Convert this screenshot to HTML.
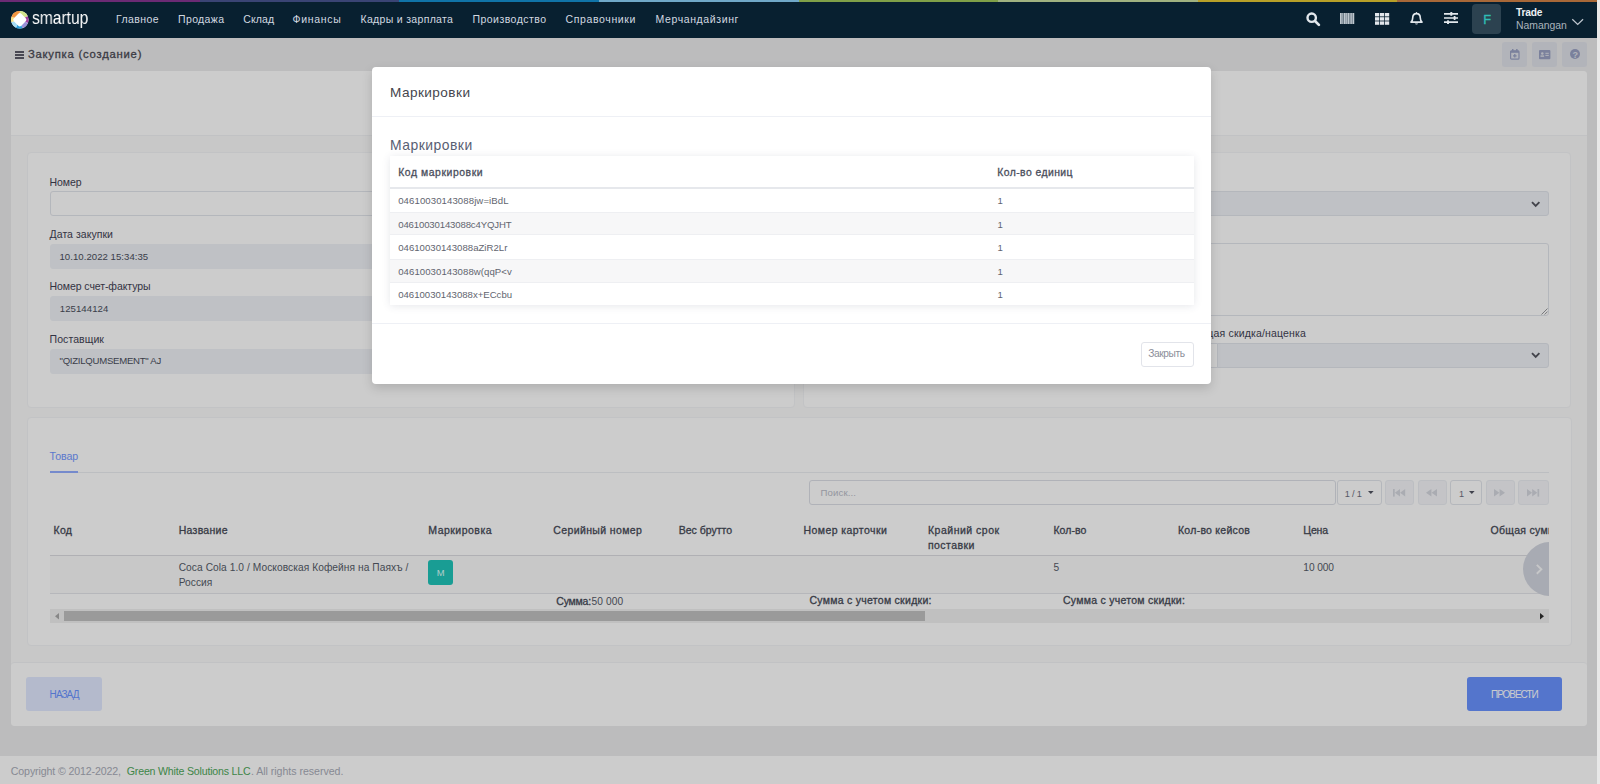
<!DOCTYPE html>
<html lang="ru">
<head>
<meta charset="utf-8">
<title>Закупка (создание)</title>
<style>
*{box-sizing:border-box;margin:0;padding:0}
html,body{width:1600px;height:784px;overflow:hidden}
body{position:relative;background:#ebebed;font-family:"Liberation Sans",sans-serif;font-size:11px;color:#3f4254}
#page{position:absolute;left:0;top:0;width:1597px;height:784px;overflow:hidden;background:#ebebed}
#vscroll{position:absolute;left:1597px;top:0;width:3px;height:784px;background:#e8e8e8}
#backdrop{position:absolute;left:0;top:0;width:1597px;height:784px;background:rgba(0,0,0,.2)}
#nav{position:absolute;left:0;top:0;width:1597.2px;height:37.7px;background:#082030}
#stripe{position:absolute;left:0;top:0;width:1597px;height:2px;display:flex}
#stripe i{flex:1;height:2px;display:block}
.t{position:absolute;white-space:nowrap;line-height:1}
.b{position:absolute}
.card{position:absolute;background:#fff;border:1px solid #f3f4f7;border-radius:4px}
.inp{position:absolute;height:25px;border-radius:3px;background:#eff2f7;border:1px solid #eff2f7}
.inp.o{background:#fff;border:1px solid #e2e5ec}
.inp.s{border:1px solid #e2e5ec}
.pg{position:absolute;top:480px;height:25px;border:1px solid #e2e5ec;border-radius:3px;background:#fff}
.pg.d{background:#f5f6f9;border-color:#eceef3}
svg{position:absolute;overflow:visible}
#modal{position:absolute;left:372px;top:67px;width:839px;height:317px;background:#fff;border-radius:4px;box-shadow:0 4px 11px rgba(0,0,0,.15)}
.row{position:absolute;left:0;width:804px}
</style>
</head>
<body>
<div id="page">
<div class="b" style="left:15px;top:51.2px;width:8.6px;height:1.5px;background:#5c5a68"></div>
<div class="b" style="left:15px;top:54.1px;width:8.6px;height:1.5px;background:#5c5a68"></div>
<div class="b" style="left:15px;top:57px;width:8.6px;height:1.5px;background:#5c5a68"></div>
<span class="t" style="left:27.90px;top:49.00px;font-size:11.3px;color:#4a4a54;-webkit-text-stroke:.3px #4a4a54;letter-spacing:0.757px;">Закупка (создание)</span>
<div class="b" style="left:1502px;top:42.2px;width:24.6px;height:24.6px;border-radius:3px;background:#dfe1e9"></div>
<div class="b" style="left:1532.3px;top:42.2px;width:24.6px;height:24.6px;border-radius:3px;background:#dfe1e9"></div>
<div class="b" style="left:1562.3px;top:42.2px;width:24.6px;height:24.6px;border-radius:3px;background:#dfe1e9"></div>
<svg style="left:1509.5px;top:48.8px" width="9.6" height="10.8" viewBox="0 0 9.6 10.8"><rect x="0.6" y="1.8" width="8.4" height="8.4" rx="1" fill="none" stroke="#9aa2c4" stroke-width="1.2"/><rect x="0.6" y="1.8" width="8.4" height="2" fill="#9aa2c4"/><rect x="2" y="0" width="1.5" height="2.4" fill="#9aa2c4"/><rect x="6.1" y="0" width="1.5" height="2.4" fill="#9aa2c4"/><path d="M4.8 5 V8.6 M3 6.8 H6.6" stroke="#9aa2c4" stroke-width="1.3"/></svg>
<svg style="left:1538.8px;top:49.7px" width="11.4" height="9.2" viewBox="0 0 11.4 9.2"><rect x="0" y="0" width="11.4" height="9.2" rx="1" fill="#9aa2c4"/><circle cx="3.3" cy="3.5" r="1.25" fill="#dfe1e9"/><rect x="1.5" y="5.4" width="3.6" height="1.4" fill="#dfe1e9"/><rect x="6.4" y="2.8" width="3.4" height="1" fill="#dfe1e9"/><rect x="6.4" y="4.9" width="3.4" height="1" fill="#dfe1e9"/></svg>
<svg style="left:1569.6px;top:49px" width="10" height="10" viewBox="0 0 10 10"><circle cx="5" cy="5" r="5" fill="#9aa2c4"/></svg>
<span class="t" style="left:1572.60px;top:51.00px;font-size:9px;color:#dfe1e9;font-weight:700;">?</span>
<div class="b" style="left:11px;top:71px;width:1576px;height:655px;background:#fafafa;border-radius:4px"></div>
<div class="b" style="left:11px;top:71px;width:1576px;height:64.5px;background:#fff;border-radius:4px 4px 0 0;border-bottom:1px solid #f2f3f6"></div>
<div class="b" style="left:11px;top:661.5px;width:1576px;height:64.5px;background:#fff;border-radius:4px;border-top:1px solid #f2f3f6"></div>
<div class="card" style="left:26.5px;top:151.5px;width:768px;height:256px"></div>
<div class="card" style="left:803.3px;top:151.5px;width:768px;height:256px"></div>
<div class="card" style="left:26.5px;top:416.5px;width:1545px;height:229px"></div>
<span class="t" style="left:49.60px;top:177.00px;font-size:10.5px;color:#3f4254;letter-spacing:-0.073px;">Номер</span>
<div class="inp o" style="left:49.5px;top:191.4px;width:721px"></div>
<span class="t" style="left:49.60px;top:229.00px;font-size:10.5px;color:#3f4254;letter-spacing:0.032px;">Дата закупки</span>
<div class="inp" style="left:49.5px;top:244.3px;width:721px"></div>
<span class="t" style="left:59.50px;top:252.00px;font-size:9.6px;color:#4a4e5c;letter-spacing:0.036px;">10.10.2022 15:34:35</span>
<span class="t" style="left:49.60px;top:281.00px;font-size:10.5px;color:#3f4254;letter-spacing:-0.079px;">Номер счет-фактуры</span>
<div class="inp" style="left:49.5px;top:296.4px;width:721px"></div>
<span class="t" style="left:59.80px;top:304.00px;font-size:9.6px;color:#4a4e5c;letter-spacing:0.055px;">125144124</span>
<span class="t" style="left:49.60px;top:334.00px;font-size:10.5px;color:#3f4254;letter-spacing:0.065px;">Поставщик</span>
<div class="inp" style="left:49.5px;top:349px;width:721px"></div>
<span class="t" style="left:59.50px;top:356.00px;font-size:9.6px;color:#4a4e5c;letter-spacing:-0.265px;">"QIZILQUMSEMENT" AJ</span>
<span class="t" style="left:826.40px;top:177.00px;font-size:10.5px;color:#3f4254;">Склад</span>
<div class="inp s" style="left:826.4px;top:191.3px;width:722.2px"></div>
<svg style="left:1531px;top:200.6px" width="9.4" height="6.4" viewBox="0 0 9.4 6.4"><path d="M1 1.2 L4.7 4.9 L8.4 1.2" fill="none" stroke="#54565f" stroke-width="1.9"/></svg>
<span class="t" style="left:826.40px;top:229.00px;font-size:10.5px;color:#3f4254;">Примечание</span>
<div class="inp o" style="left:826.4px;top:243.2px;width:722.2px;height:72.6px"></div>
<svg style="left:1540.5px;top:307.5px" width="7" height="7" viewBox="0 0 7 7"><path d="M0.5 6.5 L6.5 0.5 M3.6 6.5 L6.5 3.6" stroke="#8a8c92" stroke-width=".9"/></svg>
<span class="t" style="left:1190.30px;top:328.00px;font-size:10.5px;color:#3f4254;letter-spacing:0.163px;">Общая скидка/наценка</span>
<div class="inp o" style="left:1190.3px;top:342.8px;width:27.5px;border-radius:3px 0 0 3px"></div>
<div class="inp s" style="left:1216.6px;top:342.8px;width:332px;border-radius:0 3px 3px 0"></div>
<svg style="left:1531px;top:351.6px" width="9.4" height="6.4" viewBox="0 0 9.4 6.4"><path d="M1 1.2 L4.7 4.9 L8.4 1.2" fill="none" stroke="#54565f" stroke-width="1.9"/></svg>
<span class="t" style="left:49.60px;top:451.00px;font-size:10.6px;color:#7397ff;letter-spacing:-0.051px;">Товар</span>
<div class="b" style="left:49.5px;top:472px;width:1499px;height:1px;background:#eceef2"></div>
<div class="b" style="left:49.5px;top:471.4px;width:28.6px;height:1.7px;background:#93adff"></div>
<div class="pg" style="left:809.2px;width:526.8px;border-color:#dcdfe7"></div>
<span class="t" style="left:820.60px;top:488.00px;font-size:9.6px;color:#b9bcc8;letter-spacing:0.107px;">Поиск...</span>
<div class="pg" style="left:1336.5px;width:45px"></div>
<span class="t" style="left:1344.80px;top:490.00px;font-size:9.2px;color:#6d7080;letter-spacing:-0.220px;">1 / 1</span>
<svg style="left:1367.7px;top:490.8px" width="5.6" height="3" viewBox="0 0 5.6 3"><path d="M0 0 H5.6 L2.8 3 Z" fill="#50535f"/></svg>
<div class="pg d" style="left:1384.5px;width:29.5px"></div>
<div class="pg d" style="left:1417.5px;width:29.2px"></div>
<div class="pg d" style="left:1485.5px;width:29px"></div>
<div class="pg d" style="left:1518px;width:30.5px"></div>
<div class="pg" style="left:1450.2px;width:31.8px"></div>
<span class="t" style="left:1459.00px;top:490.00px;font-size:9.2px;color:#6d7080;">1</span>
<svg style="left:1468.6px;top:490.8px" width="5.6" height="3" viewBox="0 0 5.6 3"><path d="M0 0 H5.6 L2.8 3 Z" fill="#50535f"/></svg>
<svg style="left:1392.6px;top:488.6px" width="12.2" height="7.6" viewBox="0 0 12.2 7.6"><g fill="#d5d7df"><rect x="0" y="0" width="1.7" height="7.6"/><path d="M7 0 V7.6 L1.9 3.8 Z M12.2 0 V7.6 L7.1 3.8 Z"/></g></svg>
<svg style="left:1426.3px;top:488.6px" width="11" height="7.6" viewBox="0 0 11 7.6"><g fill="#d5d7df"><path d="M5.4 0 V7.6 L0 3.8 Z M11 0 V7.6 L5.6 3.8 Z"/></g></svg>
<svg style="left:1493.6px;top:488.6px" width="11" height="7.6" viewBox="0 0 11 7.6"><g fill="#d5d7df"><path d="M0 0 V7.6 L5.4 3.8 Z M5.6 0 V7.6 L11 3.8 Z"/></g></svg>
<svg style="left:1526.6px;top:488.6px" width="12.2" height="7.6" viewBox="0 0 12.2 7.6"><g fill="#d5d7df"><rect x="10.5" y="0" width="1.7" height="7.6"/><path d="M0 0 V7.6 L5.1 3.8 Z M5.2 0 V7.6 L10.3 3.8 Z"/></g></svg>
<div class="b" style="left:49.5px;top:515px;width:1499px;height:108px;overflow:hidden">
<div class="b" style="left:0;top:39.7px;width:1499px;height:39.2px;background:#fafafb;border-top:1.6px solid #dcdde1;border-bottom:1px solid #e4e5ea"></div>
<span class="t" style="left:4.10px;top:10.00px;font-size:10.5px;color:#464a57;-webkit-text-stroke:.3px #464a57;letter-spacing:0.216px;">Код</span>
<span class="t" style="left:129.20px;top:10.00px;font-size:10.5px;color:#464a57;-webkit-text-stroke:.3px #464a57;letter-spacing:0.277px;">Название</span>
<span class="t" style="left:378.80px;top:10.00px;font-size:10.5px;color:#464a57;-webkit-text-stroke:.3px #464a57;letter-spacing:0.480px;">Маркировка</span>
<span class="t" style="left:503.80px;top:10.00px;font-size:10.5px;color:#464a57;-webkit-text-stroke:.3px #464a57;letter-spacing:0.372px;">Серийный номер</span>
<span class="t" style="left:629.30px;top:10.00px;font-size:10.5px;color:#464a57;-webkit-text-stroke:.3px #464a57;letter-spacing:-0.015px;">Вес брутто</span>
<span class="t" style="left:754.00px;top:10.00px;font-size:10.5px;color:#464a57;-webkit-text-stroke:.3px #464a57;letter-spacing:0.426px;">Номер карточки</span>
<span class="t" style="left:878.50px;top:10.00px;font-size:10.5px;color:#464a57;-webkit-text-stroke:.3px #464a57;letter-spacing:0.501px;">Крайний срок</span>
<span class="t" style="left:1003.90px;top:10.00px;font-size:10.5px;color:#464a57;-webkit-text-stroke:.3px #464a57;letter-spacing:0.062px;">Кол-во</span>
<span class="t" style="left:1128.50px;top:10.00px;font-size:10.5px;color:#464a57;-webkit-text-stroke:.3px #464a57;letter-spacing:0.258px;">Кол-во кейсов</span>
<span class="t" style="left:1253.80px;top:10.00px;font-size:10.5px;color:#464a57;-webkit-text-stroke:.3px #464a57;letter-spacing:-0.157px;">Цена</span>
<span class="t" style="left:1441.00px;top:10.00px;font-size:10.5px;color:#464a57;-webkit-text-stroke:.3px #464a57;letter-spacing:0.293px;">Общая сумма</span>
<span class="t" style="left:878.50px;top:25.00px;font-size:10.5px;color:#464a57;-webkit-text-stroke:.3px #464a57;letter-spacing:0.421px;">поставки</span>
<span class="t" style="left:129.20px;top:48.00px;font-size:10.2px;color:#565a68;letter-spacing:0.065px;">Coca Cola 1.0 / Московская Кофейня на Паяхъ /</span>
<span class="t" style="left:129.20px;top:63.00px;font-size:10.2px;color:#565a68;letter-spacing:0.032px;">Россия</span>
<div class="b" style="left:378.5px;top:45px;width:25.2px;height:25.2px;border-radius:3px;background:#20c5b9"></div>
<span class="t" style="left:387.30px;top:53.00px;font-size:9.4px;color:#dcfffb;">M</span>
<span class="t" style="left:1003.90px;top:48.00px;font-size:10.2px;color:#565a68;">5</span>
<span class="t" style="left:1253.80px;top:48.00px;font-size:10.2px;color:#565a68;letter-spacing:-0.086px;">10 000</span>
<span class="t" style="left:506.80px;top:81.00px;font-size:10.5px;color:#464a57;-webkit-text-stroke:.3px #464a57;letter-spacing:-0.222px;">Сумма:</span>
<span class="t" style="left:542.10px;top:82.00px;font-size:10.2px;color:#565a68;letter-spacing:0.096px;">50 000</span>
<span class="t" style="left:760.00px;top:80.00px;font-size:10.5px;color:#464a57;-webkit-text-stroke:.3px #464a57;letter-spacing:0.276px;">Сумма с учетом скидки:</span>
<span class="t" style="left:1013.50px;top:80.00px;font-size:10.5px;color:#464a57;-webkit-text-stroke:.3px #464a57;letter-spacing:0.271px;">Сумма с учетом скидки:</span>
<div class="b" style="left:1473.8px;top:27px;width:54px;height:54px;border-radius:50%;background:#d3d6e0"></div>
<svg style="left:1486.8px;top:48.8px" width="6.4" height="10.6" viewBox="0 0 6.4 10.6"><path d="M0.8 0.8 L5.4 5.3 L0.8 9.8" fill="none" stroke="#f8f9fb" stroke-width="1.9"/></svg>
<div class="b" style="left:0;top:94px;width:1499px;height:13.6px;background:#f1f1f1"></div>
<div class="b" style="left:14.4px;top:95.6px;width:861px;height:10.6px;background:#c1c1c1"></div>
<svg style="left:5px;top:97.6px" width="4" height="6.4" viewBox="0 0 4 6.4"><path d="M4 0 V6.4 L0 3.2 Z" fill="#a9a9a9"/></svg>
<svg style="left:1490.5px;top:97.6px" width="4" height="6.4" viewBox="0 0 4 6.4"><path d="M0 0 V6.4 L4 3.2 Z" fill="#303030"/></svg>
</div>
<div class="b" style="left:26.2px;top:677.3px;width:76px;height:33.4px;border-radius:3px;background:#e1e9ff"></div>
<span class="t" style="left:49.60px;top:690.00px;font-size:10px;color:#6993ff;letter-spacing:-0.932px;">НАЗАД</span>
<div class="b" style="left:1467.3px;top:677.2px;width:94.8px;height:33.6px;border-radius:3px;background:#6993ff"></div>
<span class="t" style="left:1491.00px;top:690.00px;font-size:10px;color:#ffffff;letter-spacing:-1.034px;">ПРОВЕСТИ</span>
<div class="b" style="left:0;top:755.6px;width:1597px;height:29px;background:#fff"></div>
<span class="t" style="left:10.80px;top:766.00px;font-size:10.6px;color:#a9acb8;letter-spacing:-0.114px;">Copyright © 2012-2022,</span>
<span class="t" style="left:126.80px;top:766.00px;font-size:10.6px;color:#4fa85a;letter-spacing:-0.187px;">Green White Solutions LLC</span>
<span class="t" style="left:250.90px;top:766.00px;font-size:10.6px;color:#a9acb8;letter-spacing:-0.025px;">. All rights reserved.</span>
</div>
<div id="backdrop"></div>
<div id="nav"><div id="stripe"><i style="background:#6c2a74"></i><i style="background:#3a4474"></i><i style="background:#1074a8"></i><i style="background:#70a8c8"></i><i style="background:#80a048"></i><i style="background:#a0b280"></i><i style="background:#b8a028"></i><i style="background:#a86838"></i></div>
<svg style="left:10.6px;top:10.6px" width="17.6" height="17.6" viewBox="0 0 18 18">
<circle cx="9" cy="9" r="9" fill="#fff"/>
<path d="M9 9 L9 0 A9 9 0 0 1 17.2 5.3 Z" fill="#d3e38c"/>
<path d="M9 9 L17.2 5.3 A9 9 0 0 1 17.4 12.2 Z" fill="#a3409f"/>
<path d="M9 9 L17.4 12.2 A9 9 0 0 1 11.6 17.6 Z" fill="#9a8fd6"/>
<path d="M9 9 L11.6 17.6 A9 9 0 0 1 5 17.05 Z" fill="#2b9fdc"/>
<path d="M9 9 L5 17.05 A9 9 0 0 1 0.3 11.3 Z" fill="#a6dcf4"/>
<path d="M9 9 L0.3 11.3 A9 9 0 0 1 0.5 6 Z" fill="#f7dd7a"/>
<path d="M9 9 L0.5 6 A9 9 0 0 1 9 0 Z" fill="#f3953f"/>
<rect x="3.6" y="3.6" width="10.8" height="10.8" rx="2.2" fill="#fff" transform="rotate(45 9 9)"/>
</svg>
<span class="t" style="left:32.00px;top:9.00px;font-size:18.4px;color:#fff;transform:scaleX(0.8474);transform-origin:0 50%;will-change:transform;">smartup</span>
<span class="t" style="left:116.00px;top:14.00px;font-size:10.5px;color:#d2d9e0;letter-spacing:0.404px;">Главное</span>
<span class="t" style="left:178.00px;top:14.00px;font-size:10.5px;color:#d2d9e0;letter-spacing:0.373px;">Продажа</span>
<span class="t" style="left:243.25px;top:14.00px;font-size:10.5px;color:#d2d9e0;letter-spacing:0.135px;">Склад</span>
<span class="t" style="left:292.50px;top:14.00px;font-size:10.5px;color:#d2d9e0;letter-spacing:0.716px;">Финансы</span>
<span class="t" style="left:360.50px;top:14.00px;font-size:10.5px;color:#d2d9e0;letter-spacing:0.315px;">Кадры и зарплата</span>
<span class="t" style="left:472.50px;top:14.00px;font-size:10.5px;color:#d2d9e0;letter-spacing:0.459px;">Производство</span>
<span class="t" style="left:565.50px;top:14.00px;font-size:10.5px;color:#d2d9e0;letter-spacing:0.631px;">Справочники</span>
<span class="t" style="left:655.50px;top:14.00px;font-size:10.5px;color:#d2d9e0;letter-spacing:0.615px;">Мерчандайзинг</span>
<svg style="left:1306px;top:11.5px" width="14" height="14" viewBox="0 0 14 14"><circle cx="5.7" cy="5.7" r="4.2" fill="none" stroke="#e2e7ec" stroke-width="2.4"/><path d="M9 9 L12.9 12.9" stroke="#e2e7ec" stroke-width="2.7" stroke-linecap="round"/></svg>
<svg style="left:1340.4px;top:13px" width="14.2" height="11" viewBox="0 0 14.2 11"><rect x="0" y="0" width="14.2" height="11" fill="#e2e7ec" opacity=".38"/><rect x="0" y="0" width="1.6" height="11" fill="#e2e7ec" opacity=".75"/><rect x="2.4" y="0" width="0.8" height="11" fill="#e2e7ec" opacity=".75"/><rect x="4" y="0" width="1.6" height="11" fill="#e2e7ec" opacity=".75"/><rect x="6.2" y="0" width="0.8" height="11" fill="#e2e7ec" opacity=".75"/><rect x="7.6" y="0" width="1.6" height="11" fill="#e2e7ec" opacity=".75"/><rect x="9.8" y="0" width="0.8" height="11" fill="#e2e7ec" opacity=".75"/><rect x="11.2" y="0" width="0.8" height="11" fill="#e2e7ec" opacity=".75"/><rect x="12.6" y="0" width="1.6" height="11" fill="#e2e7ec" opacity=".75"/></svg>
<svg style="left:1375px;top:12.6px" width="14.2" height="11.8" viewBox="0 0 14.2 11.8"><rect x="0" y="0" width="4.25" height="3.4" fill="#e2e7ec"/><rect x="4.98" y="0" width="4.25" height="3.4" fill="#e2e7ec"/><rect x="9.96" y="0" width="4.25" height="3.4" fill="#e2e7ec"/><rect x="0" y="4.2" width="4.25" height="3.4" fill="#e2e7ec"/><rect x="4.98" y="4.2" width="4.25" height="3.4" fill="#e2e7ec"/><rect x="9.96" y="4.2" width="4.25" height="3.4" fill="#e2e7ec"/><rect x="0" y="8.4" width="4.25" height="3.4" fill="#e2e7ec"/><rect x="4.98" y="8.4" width="4.25" height="3.4" fill="#e2e7ec"/><rect x="9.96" y="8.4" width="4.25" height="3.4" fill="#e2e7ec"/></svg>
<svg style="left:1410px;top:11.8px" width="13" height="13.4" viewBox="0 0 13 13.4"><path d="M6.5 1.6 C3.9 1.6 2.7 3.7 2.7 6 C2.7 8.2 1.9 9.3 1 10.2 L12 10.2 C11.1 9.3 10.3 8.2 10.3 6 C10.3 3.7 9.1 1.6 6.5 1.6 Z" fill="none" stroke="#e2e7ec" stroke-width="1.65" stroke-linejoin="round"/><path d="M4.9 11.5 A1.7 1.7 0 0 0 8.1 11.5 Z" fill="#e2e7ec"/><rect x="5.9" y="0" width="1.2" height="1.8" rx=".6" fill="#e2e7ec"/></svg>
<svg style="left:1443.7px;top:12.4px" width="14" height="12" viewBox="0 0 14 12"><g stroke="#e2e7ec" stroke-width="1.6"><path d="M0 1.9 H14 M0 6 H14 M0 10.1 H14"/></g><g fill="#e2e7ec"><rect x="6.3" y="0" width="2" height="3.8" rx=".6"/><rect x="9.6" y="4.1" width="2" height="3.8" rx=".6"/><rect x="3" y="8.2" width="2" height="3.8" rx=".6"/></g></svg>
<div class="b" style="left:1471.8px;top:4px;width:29.2px;height:29.5px;border-radius:4px;background:#2c4250"></div>
<span class="t" style="left:1483.20px;top:14.00px;font-size:12.8px;color:#2fbdb5;-webkit-text-stroke:.3px #2fbdb5;">F</span>
<span class="t" style="left:1516.00px;top:8.00px;font-size:10.2px;color:#eef1f4;font-weight:700;letter-spacing:-0.219px;">Trade</span>
<span class="t" style="left:1516.00px;top:21.00px;font-size:10.4px;color:#aab4bd;letter-spacing:-0.019px;">Namangan</span>
<svg style="left:1572.4px;top:18.9px" width="11.4" height="6" viewBox="0 0 11.4 6"><path d="M0.3 0.3 L5.7 5.5 L11.1 0.3" fill="none" stroke="#c0c8d0" stroke-width="1.2"/></svg>
</div>
<div id="vscroll"></div>
<div id="modal">
<span class="t" style="left:18.00px;top:19.00px;font-size:13.6px;color:#45464d;letter-spacing:0.439px;">Маркировки</span>
<div class="b" style="left:0;top:49.3px;width:839px;height:1px;background:#eef0f5"></div>
<span class="t" style="left:18.00px;top:72.00px;font-size:13.9px;color:#596073;letter-spacing:0.496px;">Маркировки</span>
<div class="b" style="left:17.6px;top:88.6px;width:804.2px;height:149.8px;background:#fff;box-shadow:0 1px 8px rgba(60,70,100,.13)">
<div class="row" style="top:31.2px;height:1.8px;background:#e6e8ec"></div>
<div class="row" style="top:56.2px;height:23.6px;background:#f7f7f8;border-top:1px solid #eeeff2;border-bottom:1px solid #eeeff2"></div>
<div class="row" style="top:103.2px;height:23.8px;background:#f7f7f8;border-top:1px solid #eeeff2;border-bottom:1px solid #eeeff2"></div>
<span class="t" style="left:8.60px;top:12.40px;font-size:10.4px;color:#4a4e5c;-webkit-text-stroke:.3px #4a4e5c;letter-spacing:0.567px;">Код маркировки</span>
<span class="t" style="left:607.60px;top:12.40px;font-size:10.4px;color:#4a4e5c;-webkit-text-stroke:.3px #4a4e5c;letter-spacing:0.439px;">Кол-во единиц</span>
<span class="t" style="left:8.60px;top:40.40px;font-size:9.6px;color:#62656f;letter-spacing:0.090px;">04610030143088jw=iBdL</span>
<span class="t" style="left:607.80px;top:40.40px;font-size:9.6px;color:#62656f;">1</span>
<span class="t" style="left:8.60px;top:64.40px;font-size:9.6px;color:#62656f;letter-spacing:-0.145px;">04610030143088c4YQJHT</span>
<span class="t" style="left:607.80px;top:64.40px;font-size:9.6px;color:#62656f;">1</span>
<span class="t" style="left:8.60px;top:87.40px;font-size:9.6px;color:#62656f;letter-spacing:0.018px;">04610030143088aZiR2Lr</span>
<span class="t" style="left:607.80px;top:87.40px;font-size:9.6px;color:#62656f;">1</span>
<span class="t" style="left:8.60px;top:111.40px;font-size:9.6px;color:#62656f;letter-spacing:0.064px;">04610030143088w(qqP&lt;v</span>
<span class="t" style="left:607.80px;top:111.40px;font-size:9.6px;color:#62656f;">1</span>
<span class="t" style="left:8.60px;top:134.40px;font-size:9.6px;color:#62656f;">04610030143088x+ECcbu</span>
<span class="t" style="left:607.80px;top:134.40px;font-size:9.6px;color:#62656f;">1</span>
</div>
<div class="b" style="left:0;top:256.2px;width:839px;height:1px;background:#eef0f5"></div>
<div class="b" style="left:768.5px;top:274.8px;width:53.2px;height:25px;border:1px solid #e2e4ea;border-radius:3px;background:#fff"></div>
<span class="t" style="left:776.20px;top:282.00px;font-size:10.2px;color:#8b8e99;letter-spacing:-0.377px;">Закрыть</span>
</div>
</body>
</html>
